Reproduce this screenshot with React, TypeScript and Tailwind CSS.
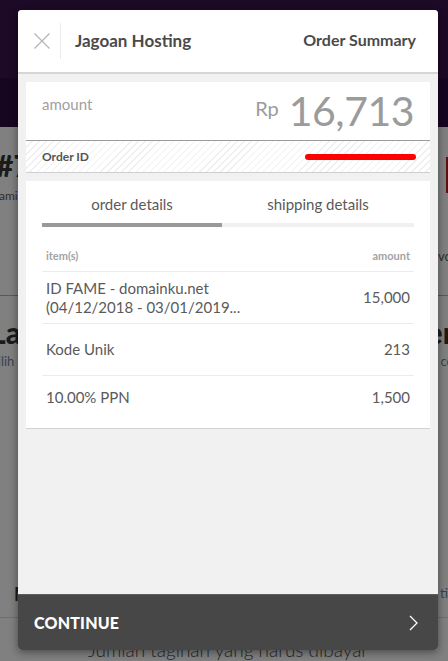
import React from 'react';

const rows = [
  { name: ['ID FAME - domainku.net', '(04/12/2018 - 03/01/2019...'], amount: '15,000' },
  { name: ['Kode Unik'], amount: '213' },
  { name: ['10.00% PPN'], amount: '1,500' },
];

const font = { fontFamily: 'Lato, "Noto Sans", sans-serif' };

const App: React.FC = () => {
  return (
    <div className="relative w-[448px] h-[661px] overflow-hidden bg-[#808080]" style={font}>
      {/* page behind the overlay */}
      <div className="flex flex-col">
        <div className="h-[78px] bg-[#1c0a27]" />
        <div className="h-[49px] bg-[#160620]" />
        <div className="flex justify-between h-[168px]">
          <div className="flex flex-col pt-[22px]">
            <div className="-ml-[4px] text-[30px] leading-[32px] font-black text-[#1b1b1b]">#7</div>
            <div className="-ml-[9px] mt-[6px] text-[12px] text-[#2e2e2e]">Kami</div>
          </div>
          <div className="flex flex-col items-end pt-[30px]">
            <div className="w-[2px] h-[36px] bg-[#5c1012]" />
            <div className="mt-[54px] text-[13px] text-[#2e2e2e] -mr-[4px]">vo</div>
          </div>
        </div>
        <div className="h-[1px] bg-[#80501f]" />
        <div className="flex justify-between pt-[20px] h-[275px]">
          <div className="-ml-[10px] flex flex-col">
            <div className="text-[30px] leading-[32px] font-black text-[#1b1b1b]">Lai</div>
            <div className="text-[13px] mt-[4px] text-[#3a4250]">Pilih s</div>
          </div>
          <div className="-mr-[6px] flex flex-col items-end">
            <div className="text-[30px] leading-[32px] font-black text-[#1b1b1b]">er</div>
            <div className="text-[13px] mt-[4px] text-[#3a4250]">co</div>
          </div>
        </div>
        <div className="flex justify-between items-center h-[46px] px-[14px]">
          <div className="text-[18px] font-bold text-[#1b1b1b]">M</div>
          <div className="text-[13px] text-[#3a4250] -mr-[14px]">ti</div>
        </div>
        <div className="h-[1px] bg-[#6e6e6e]" />
        <div className="pt-[18px] text-center text-[19px] font-light text-[#262626] pl-[8px]">Jumlah tagihan yang harus dibayar</div>
      </div>

      {/* snap modal */}
      <div className="absolute left-[18px] top-[10px] w-[420px] h-[640px] rounded-[4px] overflow-hidden flex flex-col bg-[#f1f1f1] shadow-[0_2px_8px_rgba(0,0,0,0.45)]">
        <div className="h-[64px] shrink-0 bg-white border-b-2 border-[#d6d6d6] flex items-center">
          <div className="w-[42px] h-full flex items-center justify-center">
            <svg width="16" height="16" viewBox="0 0 16 16" className="ml-[6px]">
              <path d="M0.5 0.5 L15.5 15.5 M15.5 0.5 L0.5 15.5" stroke="#b4b4b4" strokeWidth="1.2" fill="none" />
            </svg>
          </div>
          <div className="w-[1px] h-[36px] bg-[#ececec]" />
          <div className="ml-[14px] text-[17px] font-bold text-[#4a4a4a] flex-1">Jagoan Hosting</div>
          <div className="mr-[22px] text-[16px] font-bold text-[#4a4a4a] -mt-[3px]">Order Summary</div>
        </div>

        <div className="flex-1 flex flex-col px-[8px] pt-[8px]">
          <div className="bg-white flex justify-between px-[16px] pt-[13px] h-[59px] border-b border-[#9c9c9c]">
            <div className="text-[15px] text-[#a0a0a0] leading-[18px]">amount</div>
            <div className="flex items-start gap-[10px] text-[#9b9b9b]">
              <span className="text-[20px] leading-[20px] mt-[3px]">Rp</span>
              <span className="text-[41px] leading-[36px] -mt-[2px] tracking-[-0.5px]">16,713</span>
            </div>
          </div>
          <div className="h-[32px] flex items-center justify-between px-[16px] border-b border-[#cfcfcf] bg-[repeating-linear-gradient(135deg,#ffffff_0px,#ffffff_4px,#efefef_4px,#efefef_5px)]">
            <span className="text-[12px] font-bold text-[#555]">Order ID</span>
            <span className="w-[111px] h-[6px] rounded-full bg-[#ff0000] mr-[-2px]" />
          </div>

          <div className="mt-[8px] bg-white px-[16px] pt-[13px] pb-[10px] border-b border-[#d2d2d2]">
            <div className="flex">
              <div className="w-[180px] flex flex-col items-center">
                <span className="text-[15px] leading-[20px] text-[#5a5a5a]">order details</span>
                <div className="mt-[9px] w-full h-[4px] bg-[#999]" />
              </div>
              <div className="flex-1 flex flex-col items-center">
                <span className="text-[15px] leading-[20px] text-[#5a5a5a]">shipping details</span>
                <div className="mt-[9px] w-full h-[4px] bg-[#f0f0f0]" />
              </div>
            </div>
            <div className="flex justify-between px-[4px] pt-[21px] pb-[8px] border-b border-[#ececec] text-[11px] leading-[15px] font-bold text-[#a3a3a3]">
              <span>item(s)</span>
              <span>amount</span>
            </div>
            {rows.map((r, i) => (
              <div
                key={i}
                className={`flex items-center justify-between px-[4px] text-[15px] leading-[19px] text-[#5a5a5a] ${i < rows.length - 1 ? 'h-[52px] border-b border-[#ececec]' : 'h-[42px]'}`}
              >
                <div className="flex flex-col">
                  {r.name.map((n) => (
                    <span key={n}>{n}</span>
                  ))}
                </div>
                <span>{r.amount}</span>
              </div>
            ))}
          </div>
        </div>

        <div className="h-[56px] shrink-0 bg-[#474747] border-t border-[#5e5e5e] flex items-center justify-between pl-[16px] pr-[20px]">
          <span className="text-[16px] font-black text-white tracking-[0.2px]">CONTINUE</span>
          <svg width="9" height="16" viewBox="0 0 9 16">
            <path d="M1 1 L8 8 L1 15" stroke="#ffffff" strokeWidth="1.3" fill="none" />
          </svg>
        </div>
      </div>
    </div>
  );
};

export default App;
